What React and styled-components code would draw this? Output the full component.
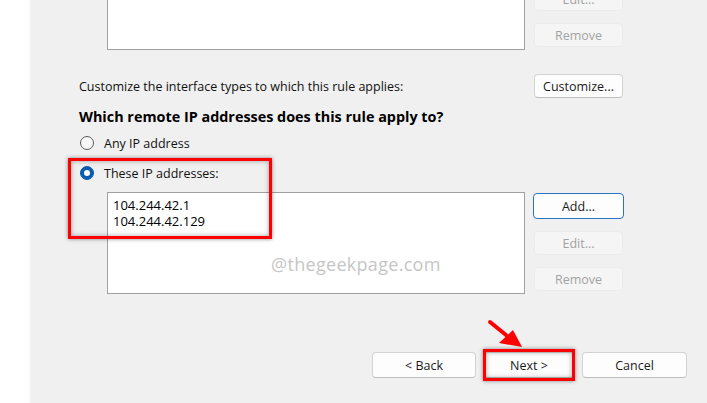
import React from 'react';
import styled, { createGlobalStyle } from 'styled-components';

const Global = createGlobalStyle`
  html, body { margin: 0; padding: 0; background: #fff; overflow: hidden; }
  #root { width: 707px; height: 403px; }
`;

const Page = styled.div`
  position: relative;
  display: flex;
  width: 707px;
  height: 403px;
  overflow: hidden;
  background: #fff;
  font-family: "Open Sans", "Noto Sans", sans-serif;
  font-size: 12.5px;
  color: #111;
`;

const Gutter = styled.div`
  width: 29px;
  flex: none;
  background: #fff;
`;

const Dialog = styled.div`
  flex: 1;
  display: flex;
  flex-direction: column;
  background: #f0f0f0;
  border-left: 2px solid #f7f7f7;
  padding: 0 20px 0 48px;
`;

const ListGroup = styled.div`
  display: flex;
  gap: 9px;
  padding-left: 28px;
  margin-top: ${p => p.$mt}px;
`;

const ListBox = styled.div`
  box-sizing: border-box;
  width: 418px;
  height: ${p => p.$h}px;
  background: #fff;
  border: 1px solid #a0a0a0;
  padding: 4px 5px;
  line-height: 16px;
  font-size: 13px;
  color: #000;
`;

const ButtonCol = styled.div`
  display: flex;
  flex-direction: column;
  gap: 12px;
  width: 89px;
  margin-top: ${p => p.$mt}px;
`;

const Button = styled.button`
  box-sizing: border-box;
  width: ${p => p.$w || 89}px;
  height: ${p => p.$h || 24}px;
  padding: 0;
  font-family: inherit;
  font-size: 12.5px;
  border-radius: 4px;
  background: ${p => (p.disabled ? '#f5f5f5' : '#fdfdfd')};
  color: ${p => (p.disabled ? '#a2a2a2' : '#1a1a1a')};
  border: 1px solid ${p => (p.$focus ? '#2a72c6' : p.disabled ? '#ececec' : '#d3d3d3')};
  border-bottom-color: ${p => (p.$focus ? '#2a72c6' : p.disabled ? '#ececec' : '#bdbdbd')};
  margin-left: ${p => (p.$focus ? -1 : 0)}px;
  flex: none;
`;

const CustomizeRow = styled.div`
  display: flex;
  align-items: center;
  justify-content: space-between;
  width: 544px;
  margin-top: 24px;
`;

const Label = styled.span`
  font-size: 12.5px;
  color: #111;
`;

const Heading = styled.div`
  margin-top: 10px;
  font-size: 14.4px;
  font-weight: bold;
  line-height: 17px;
  color: #000;
`;

const RadioRow = styled.div`
  display: flex;
  align-items: center;
  gap: 10px;
  height: 16px;
  margin-top: ${p => p.$mt}px;
  padding-left: 1px;
`;

const RadioCircle = styled.span`
  box-sizing: border-box;
  width: 14px;
  height: 14px;
  border-radius: 50%;
  flex: none;
  display: flex;
  align-items: center;
  justify-content: center;
  background: ${p => (p.$on ? '#0a5cb0' : '#f7f7f7')};
  border: 1px solid ${p => (p.$on ? '#0a5cb0' : '#5a5a5a')};
  &::after {
    content: '';
    display: ${p => (p.$on ? 'block' : 'none')};
    width: 6px;
    height: 6px;
    border-radius: 50%;
    background: #fff;
  }
`;

const BottomRow = styled.div`
  display: flex;
  justify-content: flex-end;
  gap: 8px;
  margin-top: 58px;
`;

const Highlight = styled.div`
  position: absolute;
  box-sizing: border-box;
  left: ${p => p.$x}px;
  top: ${p => p.$y}px;
  width: ${p => p.$w}px;
  height: ${p => p.$h}px;
  border: 3px solid #ff0000;
  box-shadow: 0 0 4px rgba(0, 0, 0, 0.45), inset 0 0 5px rgba(0, 0, 0, 0.35);
  pointer-events: none;
`;

const Watermark = styled.div`
  position: absolute;
  left: 271px;
  top: 252px;
  font-family: "Open Sans", "Noto Sans", sans-serif;
  font-size: 18px;
  letter-spacing: 0.3px;
  color: #c6c6c6;
  pointer-events: none;
`;

const ArrowSvg = styled.svg`
  position: absolute;
  left: 484px;
  top: 316px;
  pointer-events: none;
`;

export default function App() {
  return (
    <>
      <Global />
      <Page>
        <Gutter />
        <Dialog>
          <ListGroup $mt={-20}>
            <ListBox $h={70} />
            <ButtonCol $mt={7}>
              <Button disabled>Edit...</Button>
              <Button disabled>Remove</Button>
            </ButtonCol>
          </ListGroup>

          <CustomizeRow>
            <Label>Customize the interface types to which this rule applies:</Label>
            <Button>Customize...</Button>
          </CustomizeRow>

          <Heading>Which remote IP addresses does this rule apply to?</Heading>

          <RadioRow $mt={10}>
            <RadioCircle />
            <Label>Any IP address</Label>
          </RadioRow>
          <RadioRow $mt={14}>
            <RadioCircle $on />
            <Label>These IP addresses:</Label>
          </RadioRow>

          <ListGroup $mt={11}>
            <ListBox $h={102}>
              <div>104.244.42.1</div>
              <div>104.244.42.129</div>
            </ListBox>
            <ButtonCol $mt={1}>
              <Button $focus $w={91} $h={26}>Add...</Button>
              <Button disabled>Edit...</Button>
              <Button disabled>Remove</Button>
            </ButtonCol>
          </ListGroup>

          <BottomRow>
            <Button $w={104} $h={26}>&lt; Back</Button>
            <Button $w={90} $h={26}>Next &gt;</Button>
            <Button $w={105} $h={26}>Cancel</Button>
          </BottomRow>
        </Dialog>

        <Watermark>@thegeekpage.com</Watermark>
        <Highlight $x={68} $y={158} $w={204} $h={81} />
        <Highlight $x={483} $y={349} $w={92} $h={32} />
        <ArrowSvg width="45" height="35" viewBox="0 0 45 35">
          <line x1="6" y1="6" x2="22" y2="19" stroke="#f00" strokeWidth="4" strokeLinecap="round" />
          <polygon points="15,27 29,14 38,31" fill="#f00" />
        </ArrowSvg>
      </Page>
    </>
  );
}
